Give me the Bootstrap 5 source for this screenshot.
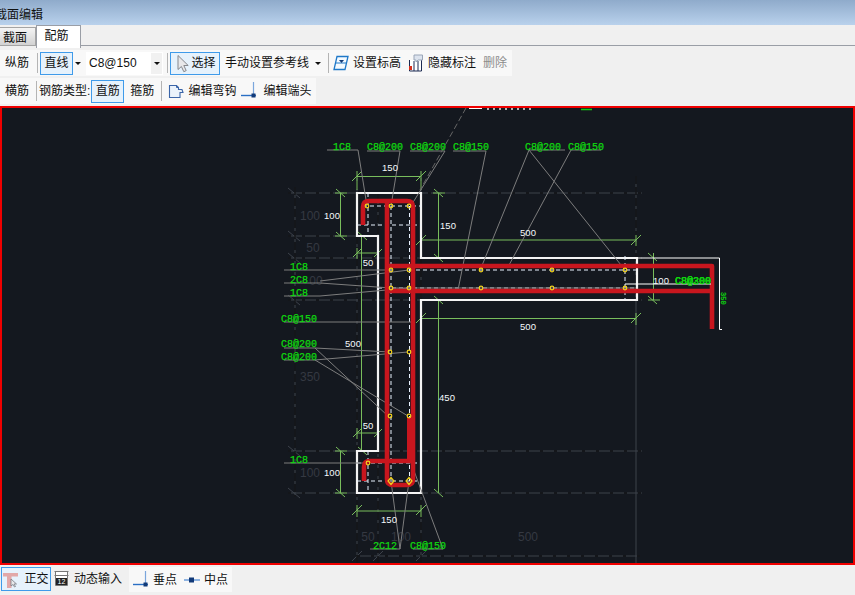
<!DOCTYPE html>
<html lang="zh-CN">
<head>
  <meta charset="UTF-8">
  <meta name="viewport" content="width=device-width, initial-scale=1">
  <title>截面编辑</title>
  <link href="https://cdn.jsdelivr.net/npm/bootstrap@5.3.2/dist/css/bootstrap.min.css" rel="stylesheet">
  <style>
    html, body { height: 100%; overflow: hidden; }
    body { background: #f0f0f0; color: #111; font: 12px/1 "Liberation Sans", "Noto Sans CJK SC", sans-serif; }
    .title-bar { height: 25px; background: linear-gradient(#8fabcb, #b9d1ec); overflow: hidden; white-space: nowrap; line-height: 30px; text-indent: -5px; }
    .tab-strip { height: 25px; position: relative; }
    .tab-line { height: 21px; border-bottom: 1px solid #9a9ea6; }
    .tab-item { height: 21px; text-align: center; overflow: hidden; white-space: nowrap; }
    .tab-off { width: 36px; margin-top: 2px; height: 19px; line-height: 20px; background: linear-gradient(#f4f4f4, #d2d2d2); border: 1px solid #a4a4a4; border-left: 0; text-indent: -5px; }
    .tab-on { width: 43px; height: 21px; line-height: 20px; background: #fff; border: 1px solid #9a9ea6; border-bottom: 0; margin-bottom: -1px; padding-bottom: 1px; box-sizing: content-box; text-indent: -4px; }
    .tool-row { height: 26px; margin-bottom: 2px; width: max-content; background: #f8f8f8; padding-left: 5px; white-space: nowrap; }
    .tool-sep { width: 1px; height: 20px; background: #b4b4b4; flex: none; }
    .tool-on { height: 23px; border: 1px solid #3f9bea; background: #e6f2fc; display: flex; align-items: center; justify-content: center; flex: none; }
    .tool-caret { width: 0; height: 0; border: 3px solid transparent; border-top: 3px solid #111; border-bottom: 0; flex: none; }
    .tool-combo { width: 77px; height: 23px; background: #fff; padding: 0 1px 0 3px; flex: none; }
    .combo-arrow { width: 11px; height: 21px; background: #f1f1f1; }
    .tool-off { color: #8c8c8c; }
    .gap-tight { gap: 2px; }
    .gap-wide { gap: 5px; }
    .ml-1 { margin-left: 1px; } .ml-2 { margin-left: 2px; } .ml-4 { margin-left: 4px; } .ml-5 { margin-left: 5px; }
    .ml-6 { margin-left: 6px; } .ml-7 { margin-left: 7px; } .ml-8 { margin-left: 8px; }
    .btn-33 { width: 33px; } .btn-50 { width: 50px; }
    .pr-5 { margin-right: 5px; }
    .cad-box { height: 459px; border: 2px solid #f00000; background: #14181f; overflow: hidden; }
    .cad-box svg { display: block; }
    .status-row { height: 30px; padding-top: 2px; white-space: nowrap; }
    .status-main { height: 24px; width: 50px; margin-left: 1px; }
    .status-icon { margin-left: 3px; margin-top: 3px; }
    .status-text { margin-left: 4px; margin-top: 6px; }
    .status-group { height: 25px; background: #f8f8f8; margin-left: 7px; padding: 0 4px; }
    .ln-wall { fill: none; stroke: #f4f4f4; stroke-width: 2.2; }
    .ln-bar { fill: none; stroke: #c8161e; stroke-width: 4.6; stroke-linejoin: round; }
    .ln-grey { stroke: #3d424b; stroke-width: 1; fill: none; }
    .ln-black-h { stroke: #000; stroke-width: 1; stroke-dasharray: 3 11; fill: none; }
    .ln-black-v { stroke: #000; stroke-width: 1; stroke-dasharray: 8 3; fill: none; }
    .ln-dash { stroke: #e8f2ff; stroke-width: 1; stroke-dasharray: 4 3; fill: none; }
    .ln-dim { stroke: #78bd5c; stroke-width: 1; fill: none; }
    .ln-lead { stroke: #7d7d7d; stroke-width: 1; fill: none; }
    .ln-white { stroke: #fff; stroke-width: 1; fill: none; }
    .ln-clip-w { stroke: #e8e8e8; stroke-width: 1.500; stroke-dasharray: 2 4; fill: none; }
    .ln-clip-g { stroke: #12c812; stroke-width: 1.500; fill: none; }
    .pt { fill: none; stroke: #f2d21c; stroke-width: 1.2; }
    .t-dim { fill: #f4f8fc; font: 9.5px "Liberation Sans", sans-serif; text-anchor: middle; }
    .t-bar { fill: #0fd80f; stroke: #0fd80f; stroke-width: .25; font: 10px "Liberation Mono", monospace; }
    .t-small { font-size: 7px; }
    .t-ghost { fill: #353942; font: 12px "Liberation Sans", sans-serif; text-anchor: middle; }
  </style>
</head>
<body>
  <div class="title-bar">截面编辑</div>

  <div class="tab-strip">
    <div class="tab-line d-flex align-items-start">
      <div class="tab-item tab-off">截面</div>
      <div class="tab-item tab-on">配筋</div>
    </div>
  </div>

  <div class="tool-row d-flex align-items-center">
    <span>纵筋</span>
    <span class="tool-sep ml-8"></span>
    <span class="tool-on btn-33 ml-2">直线</span>
    <span class="tool-caret ml-2"></span>
    <div class="tool-combo d-flex align-items-center justify-content-between ml-5">C8@150<span class="combo-arrow d-flex align-items-center justify-content-center"><span class="tool-caret"></span></span></div>
    <span class="tool-sep ml-4"></span>
    <span class="tool-on gap-tight btn-50 ml-2">
      <svg width="15" height="19" viewBox="0 0 15 19"><path d="M3 1.500v14l3.400-3 2.400 5.200 2.400-1.100-2.400-5.100h4.400z" fill="#e8e8ea" stroke="#85878c"/></svg>选择
    </span>
    <span class="ml-5">手动设置参考线</span>
    <span class="tool-caret ml-6"></span>
    <span class="tool-sep ml-7"></span>
    <svg class="ml-4" width="16" height="16" viewBox="0 0 16 16"><path d="M4 1.500h11l-3 13H1z" fill="#f4faff" stroke="#1f78c8" stroke-width="1.300"/><path d="M2.500 8h11" stroke="#1f78c8"/><path d="M6 5h5L8.500 8z" fill="#123a78"/></svg>
    <span class="ml-4">设置标高</span>
    <svg class="ml-7" width="16" height="18" viewBox="0 0 16 18"><path d="M1.500 6v11h12V6" fill="#fff" stroke="#1c2b52"/><path d="M6 7v10M10 7v10" stroke="#1c2b52"/><rect x="1" y="12" width="3" height="4" fill="#d8301c"/><path d="M6 1h8.500v5H10l-2 2V6H6z" fill="#dce3ee" stroke="#9aa6b8"/></svg>
    <span class="ml-4">隐藏标注</span>
    <span class="tool-off ml-7 pr-5">删除</span>
  </div>

  <div class="tool-row d-flex align-items-center">
    <span>横筋</span>
    <span class="tool-sep ml-7"></span>
    <span class="ml-2">钢筋类型:</span>
    <span class="tool-on btn-33 ml-1">直筋</span>
    <span class="ml-6">箍筋</span>
    <span class="tool-sep ml-7"></span>
    <svg class="ml-6" width="16" height="16" viewBox="0 0 16 16"><path d="M1.500 2.500h7l2 2v2h3.500l1 3-3 0v5h-10.500z" fill="#eaf2fb" stroke="#3b65a8" stroke-width="1.100"/><path d="M10.500 4.500h-2v-2" fill="none" stroke="#3b65a8"/></svg>
    <span class="ml-4">编辑弯钩</span>
    <svg class="ml-5" width="16" height="18" viewBox="0 0 16 18"><path d="M0 13.500h15" stroke="#2a6fc4" stroke-width="1.400"/><path d="M12.500 0v13" stroke="#7aa6dc" stroke-width="1.200"/><rect x="10.500" y="11.500" width="4" height="4" fill="#123a78"/></svg>
    <span class="ml-6 pr-5">编辑端头</span>
  </div>

  <div class="cad-box">
    <svg width="851" height="455" viewBox="2 108 851 455" role="img" aria-label="截面配筋图">
      <!-- axis grid: horizontals mostly grey, verticals mostly black -->
      <path class="ln-grey" d="M288 193H642M288 236H378M288 258H642M288 300H642M288 451H642M288 493H642M357 556H640M636 176V563
        M288 188l12 10M288 231l12 10M288 253l12 10M288 295l12 10M288 446l12 10M288 488l12 10M352 561l10-10M373 561l10-10M416 561l10-10"/>
      <path class="ln-black-h" d="M288 193H642M288 236H378M288 258H642M288 300H642M288 451H642M288 493H642M357 556H640"/>
      <path class="ln-grey" d="M295 187V497M357 170V563M378 193V563M421 170V563"/>
      <path class="ln-black-v" d="M295 187V497M357 170V563M378 193V563M421 170V563M636 176V300"/>

      <text class="t-ghost" x="310" y="220">100</text>
      <text class="t-ghost" x="313" y="252">50</text>
      <text class="t-ghost" x="316" y="285">00</text>
      <text class="t-ghost" x="310" y="381">350</text>
      <text class="t-ghost" x="310" y="477">100</text>
      <text class="t-ghost" x="368" y="541">50</text>
      <text class="t-ghost" x="401" y="541">100</text>
      <text class="t-ghost" x="528" y="541">500</text>

      <!-- dimension lines -->
      <path class="ln-dim" d="M357 176.500H421M357 171V190M421 171V190M352 181l10-10M416 181l10-10
        M340.500 193V236M335 193H347M335 236H347M336 189l9 8M336 232l9 8
        M438.500 193V258M433 193H445M433 258H445M434 189l9 8M434 254l9 8
        M421 240H636M421 235V246M636 235V246M416 245l10-10M631 245l10-10
        M361.500 236V451M357 253H378M357 248V259M378 248V259M353 257l8-8M374 257l8-8M358 232l9 8
        M357 433H378M357 428V439M378 428V439M353 437l8-8M374 437l8-8M358 447l9 8
        M438.500 300V493M433 300H445M434 296l9 8M434 489l9 8
        M421 318.500H636M421 313V325M636 313V325M416 323l10-10M631 323l10-10
        M340.500 451V493M335 451H347M335 493H347M336 447l9 8M336 489l9 8
        M357 511H421M357 505V517M421 505V517M352 515l10-10M416 515l10-10
        M653.500 253V300M648 300H660M648 253l9 8M648 296l9 8"/>

      <!-- section outline -->
      <path class="ln-wall" d="M357 193H421V258H637V300H421V493H357V451H378V236H357Z"/>

      <!-- stirrup and tie centre lines -->
      <path class="ln-dash" d="M363 206H421M357 225H421M368 193V236M391 206V482M409.500 206V481M409 270H636M378 288H636M625 256V300M357 463H421M357 481H421M368 451V493"/>

      <!-- leaders -->
      <path class="ln-lead" d="M327 150H358L367 206M367 151H400L391 206M410 151H445L412 204M453 151H486L458 290
        M529 150H565M529 150L481 268M529 150L625 270M571 150H601M571 150L508 267
        M284 270H391M320 281L409 270M284 283H320L391 288M284 296H320L409 288M391 288H636
        M284 322H414M284 348H315L390 352M315 348L388 416M284 360H315L408 352M315 360L408 416
        M284 463H368M370 549H400L391 481M400 549L409 481M413 549H443L410 460"/>
      <path d="M466 108L420 190" stroke="#666" stroke-dasharray="6 3" fill="none"/>
      <path class="ln-white" d="M469 108.500H482"/>
      <path class="ln-clip-w" d="M487 109H535"/>
      <path class="ln-clip-g" d="M581 109.500H592"/>

      <!-- rebars -->
      <path class="ln-bar" d="M363 225V207Q363 201 369 201H407Q413 201 413 207V460"/>
      <path class="ln-bar" d="M387 201V479Q387 485 393 485H407Q413 485 413 479V460"/>
      <path class="ln-bar" d="M364 481V467Q364 461 370 461H413"/>
      <path class="ln-bar" d="M387 266H712V329"/>
      <path class="ln-bar" d="M387 291H712"/>
      <path d="M407 417h7v44h-7z" fill="#c8161e"/>

      <!-- free rebar dimension on the right -->
      <path class="ln-white" d="M625 258H719.500V329.500H722M625 284H711"/>

      <!-- bar points -->
      <g class="pt">
        <circle cx="367" cy="206" r="1.800"/><circle cx="391" cy="206" r="1.800"/><circle cx="409" cy="206" r="1.800"/>
        <circle cx="391" cy="270" r="1.800"/><circle cx="409" cy="270" r="1.800"/><circle cx="481" cy="270" r="1.800"/><circle cx="552" cy="270" r="1.800"/><circle cx="625" cy="270" r="1.800"/>
        <circle cx="391" cy="288" r="1.800"/><circle cx="409" cy="288" r="1.800"/><circle cx="481" cy="288" r="1.800"/><circle cx="552" cy="288" r="1.800"/><circle cx="625" cy="288" r="1.800"/>
        <circle cx="390" cy="352" r="1.800"/><circle cx="409" cy="352" r="1.800"/><circle cx="390" cy="416" r="1.800"/><circle cx="409" cy="416" r="1.800"/><circle cx="368" cy="463" r="1.800"/>
        <path d="M391 477.500l3 3.500-3 3.500-3-3.500zM409 477.500l3 3.500-3 3.500-3-3.500z"/>
      </g>

      <!-- dimension values -->
      <text class="t-dim" x="390" y="171">150</text>
      <text class="t-dim" x="332" y="219">100</text>
      <text class="t-dim" x="448" y="229">150</text>
      <text class="t-dim" x="368" y="266">50</text>
      <text class="t-dim" x="528" y="236">500</text>
      <text class="t-dim" x="661" y="284">100</text>
      <text class="t-dim" x="528" y="330">500</text>
      <text class="t-dim" x="353" y="347">500</text>
      <text class="t-dim" x="447" y="401">450</text>
      <text class="t-dim" x="368" y="429">50</text>
      <text class="t-dim" x="332" y="476">100</text>
      <text class="t-dim" x="389" y="523">150</text>

      <!-- bar labels -->
      <text class="t-bar" x="333" y="150">1C8</text>
      <text class="t-bar" x="367" y="150">C8@200</text>
      <text class="t-bar" x="410" y="150">C8@200</text>
      <text class="t-bar" x="453" y="150">C8@150</text>
      <text class="t-bar" x="525" y="150">C8@200</text>
      <text class="t-bar" x="568" y="150">C8@150</text>
      <text class="t-bar" x="290" y="270">1C8</text>
      <text class="t-bar" x="290" y="283">2C8</text>
      <text class="t-bar" x="290" y="296">1C8</text>
      <text class="t-bar" x="281" y="322">C8@150</text>
      <text class="t-bar" x="281" y="347">C8@200</text>
      <text class="t-bar" x="281" y="360">C8@200</text>
      <text class="t-bar" x="290" y="463">1C8</text>
      <text class="t-bar" x="675" y="284">C8@200</text>
      <text class="t-bar" x="675" y="284">C8@300</text>
      <text class="t-bar" x="373" y="549">2C12</text>
      <text class="t-bar" x="410" y="549">C8@150</text>
      <text class="t-bar t-small" transform="translate(721 292) rotate(90)">350</text>
    </svg>
  </div>

  <div class="status-row d-flex align-items-start">
    <span class="tool-on gap-wide status-main">
      <svg width="16" height="17" viewBox="0 0 16 17"><path d="M0 2h15v3.500H8.500V17H4V5.500H0z" fill="#e2a8a8"/><path d="M8 8v7l2-1.500 1.500 2.500 1-.5-1.500-2.500h2.500z" fill="#e8e8ea" stroke="#6d7078" stroke-width=".7"/></svg>正交
    </span>
    <svg class="status-icon" width="16" height="17" viewBox="0 0 16 17"><path d="M.500 1.500h14M.500 5.500h14M1.500 1.500v14h12v-14" fill="#fff" stroke="#777"/><rect x="2" y="8" width="11" height="7" fill="#222"/><text x="7.500" y="14" fill="#fff" font-size="7" text-anchor="middle" font-family="Liberation Sans">12</text></svg>
    <span class="status-text">动态输入</span>
    <div class="status-group d-flex align-items-center">
      <svg width="16" height="18" viewBox="0 0 16 18"><path d="M0 13.500h15" stroke="#2a6fc4" stroke-width="1.400"/><path d="M12.500 0v13" stroke="#7aa6dc" stroke-width="1.200"/><rect x="10.500" y="11.500" width="4" height="4" fill="#123a78"/></svg>
      <span class="ml-4">垂点</span>
      <svg class="ml-7" width="16" height="10" viewBox="0 0 16 10"><path d="M0 5h16" stroke="#8fb4e2" stroke-width="2"/><rect x="5" y="2.500" width="5" height="5" fill="#123a78"/></svg>
      <span class="ml-4">中点</span>
    </div>
  </div>

  <script src="https://cdn.jsdelivr.net/npm/bootstrap@5.3.2/dist/js/bootstrap.bundle.min.js"></script>
</body>
</html>
